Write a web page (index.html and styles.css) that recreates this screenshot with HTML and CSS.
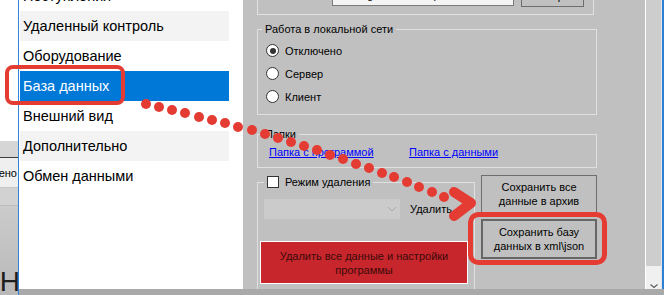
FILE: index.html
```html
<!DOCTYPE html>
<html lang="ru">
<head>
    <meta charset="UTF-8">
    <title>Настройки</title>
    <link rel="stylesheet" href="styles.css">
</head>
<body>
    <div class="screen">
        <div class="bgwin">
            <div class="bg-top"></div>
            <div class="bg-bar"></div>
            <div class="bg-row"><span>Выполнено</span></div>
            <div class="bg-strip"></div>
            <div class="bg-low"><span class="bg-big">Н</span></div>
        </div>

        <div class="dialog">
            <div class="dialog-body">
                <ul class="menu">
                    <li class="menu-item">Поступления</li>
                    <li class="menu-item alt">Удаленный контроль</li>
                    <li class="menu-item">Оборудование</li>
                    <li class="menu-item active">База данных</li>
                    <li class="menu-item">Внешний вид</li>
                    <li class="menu-item alt">Дополнительно</li>
                    <li class="menu-item">Обмен данными</li>
                </ul>

                <div class="panel">
                    <div class="topbox">
                        <span class="path-label">Путь к базе:</span>
                        <span class="path-field">C:\Program Files\Торговля\base</span>
                        <span class="path-btn">Обзор...</span>
                    </div>

                    <fieldset class="group net">
                        <legend class="group-title">Работа в локальной сети</legend>
                        <div class="radio-row"><span class="radio checked"></span>Отключено</div>
                        <div class="radio-row"><span class="radio"></span>Сервер</div>
                        <div class="radio-row"><span class="radio"></span>Клиент</div>
                    </fieldset>

                    <fieldset class="group folders">
                        <legend class="group-title">Папки</legend>
                        <div class="links">
                            <a class="link" href="#">Папка с программой</a>
                            <a class="link" href="#">Папка с данными</a>
                        </div>
                    </fieldset>

                    <div class="bottom-row">
                        <fieldset class="group del">
                            <legend class="group-title check-title"><span class="check"></span>Режим удаления</legend>
                            <div class="del-row">
                                <div class="combo">
                                    <svg width="10" height="6" viewBox="0 0 10 6"><path d="M1 1 L5 5 L9 1" fill="none" stroke="#a9a9a9" stroke-width="1"/></svg>
                                </div>
                                <span class="del-text">Удалить</span>
                            </div>
                            <div class="danger-btn">Удалить все данные и настройки<br>программы</div>
                        </fieldset>

                        <div class="side">
                            <div class="btn">Сохранить все<br>данные в архив</div>
                            <div class="btn focus">Сохранить базу<br>данных в xml\json</div>
                        </div>
                    </div>
                </div>

                <div class="scroll">
                    <div class="scroll-btn">
                        <svg width="8" height="4" viewBox="0 0 8 4"><path d="M0.5 0.5 L4 3.5 L7.5 0.5" fill="none" stroke="#606060" stroke-width="1.2"/></svg>
                    </div>
                </div>
                <div class="edge"></div>
            </div>
            <div class="dialog-bottom"></div>
        </div>

        <svg class="marks" width="665" height="295" viewBox="0 0 665 295">
            <rect x="7" y="67" width="116" height="36" rx="6" fill="none" stroke="#e43b33" stroke-width="4"/>
            <rect x="470.5" y="214.5" width="134" height="48" rx="8" fill="none" stroke="#e43b33" stroke-width="5"/>
            <g fill="#e43b33">
                <circle cx="146" cy="104" r="5"/>
                <circle cx="159" cy="107" r="5"/>
                <circle cx="172" cy="110" r="5"/>
                <circle cx="185" cy="113" r="5"/>
                <circle cx="199" cy="117" r="5"/>
                <circle cx="212" cy="120" r="5"/>
                <circle cx="225" cy="123" r="5"/>
                <circle cx="238" cy="127" r="5"/>
                <circle cx="252" cy="130" r="5"/>
                <circle cx="265" cy="134" r="5"/>
                <circle cx="278" cy="138" r="5"/>
                <circle cx="291" cy="142" r="5"/>
                <circle cx="304" cy="146" r="5"/>
                <circle cx="317" cy="150" r="5"/>
                <circle cx="330" cy="155" r="5"/>
                <circle cx="343" cy="159" r="5"/>
                <circle cx="356" cy="164" r="5"/>
                <circle cx="369" cy="168" r="5"/>
                <circle cx="382" cy="173" r="5"/>
                <circle cx="394" cy="177" r="5"/>
                <circle cx="407" cy="182" r="5"/>
                <circle cx="419" cy="187" r="5"/>
                <circle cx="432" cy="192" r="5"/>
                <circle cx="444" cy="197" r="5"/>
            </g>
            <path d="M454 192 L471 203 L454 216" fill="none" stroke="#e43b33" stroke-width="10" stroke-linecap="round" stroke-linejoin="round"/>
        </svg>
    </div>
</body>
</html>
```

FILE: styles.css
```css
body {
    margin: 0;
    width: 665px;
    height: 295px;
    overflow: hidden;
    font-family: "Liberation Sans", Arial, sans-serif;
    font-size: 11px;
    color: #000;
    background-color: #fff;
}

.screen {
    position: relative;
    display: flex;
    width: 665px;
    height: 295px;
}

/* окно на заднем плане */
.bgwin {
    width: 18px;
    flex-shrink: 0;
    display: flex;
    flex-direction: column;
    overflow: hidden;
}

.bg-top {
    height: 141px;
    background-color: #fff;
}

.bg-bar {
    height: 16px;
    background-color: #d6d6d6;
    border-bottom: 1px solid #3c3c3c;
}

.bg-row {
    height: 29px;
    background-color: #efefef;
    border-bottom: 1px solid #c6c6c6;
    display: flex;
    justify-content: flex-end;
    align-items: center;
    white-space: nowrap;
    padding-right: 1px;
    font-size: 11px;
}

.bg-strip {
    height: 17px;
    background-color: #d2d2d2;
    border-bottom: 1px solid #bdbdbd;
}

.bg-low {
    flex: 1;
    background: linear-gradient(#cbcbcb, #b9b9b9);
    display: flex;
    justify-content: flex-end;
    align-items: flex-end;
}

.bg-big {
    font-size: 28px;
    line-height: 28px;
    color: #1e1e1e;
    margin-right: -2px;
    margin-bottom: -1px;
}

/* диалог настроек */
.dialog {
    width: 646px;
    flex-shrink: 0;
    border-left: 1px solid #2f86d8;
    box-sizing: border-box;
    display: flex;
    flex-direction: column;
}

.dialog-body {
    display: flex;
    height: 289px;
}

.dialog-bottom {
    height: 6px;
    background-color: #a9a9a9;
}

.menu {
    width: 224px;
    flex-shrink: 0;
    margin: 0;
    padding: 0;
    list-style: none;
    background-color: #fff;
    overflow: hidden;
}

.menu-item {
    width: 209px;
    height: 30px;
    margin-left: 1px;
    padding-left: 3px;
    box-sizing: border-box;
    line-height: 30px;
    font-size: 14.5px;
    white-space: nowrap;
}

.menu-item:first-child {
    margin-top: -19px;
}

.menu-item.alt {
    background-color: #f3f3f3;
}

.menu-item.active {
    background-color: #0078d7;
    color: #fff;
}

.panel {
    width: 402px;
    flex-shrink: 0;
    padding-left: 14px;
    box-sizing: border-box;
    background-color: #c0c0c0;
    overflow: hidden;
    display: flex;
    flex-direction: column;
}

.topbox {
    width: 337px;
    height: 45px;
    flex-shrink: 0;
    margin-top: -30px;
    border: 1px solid #e0e0e0;
    border-top: none;
    box-sizing: border-box;
    display: flex;
    align-items: flex-end;
    padding: 0 0 8px 4px;
}

.path-label {
    width: 70px;
    align-self: center;
    margin-bottom: -8px;
    white-space: nowrap;
}

.path-field {
    width: 182px;
    height: 20px;
    box-sizing: border-box;
    background-color: #f4f4f4;
    border: 1px solid #7a7a7a;
    padding: 2px 3px;
    white-space: nowrap;
    overflow: hidden;
}

.path-btn {
    width: 63px;
    height: 22px;
    margin-left: 7px;
    margin-bottom: -1px;
    box-sizing: border-box;
    border: 1px solid #6d6d6d;
    text-align: center;
    line-height: 20px;
}

.group {
    margin: 0;
    padding: 0 4px;
    min-width: 0;
    border: 1px solid #e0e0e0;
    box-sizing: border-box;
    flex-shrink: 0;
}

.group-title {
    padding: 0 3px;
    line-height: 16px;
    font-size: 11px;
}

.net {
    width: 340px;
    margin-top: 6px;
    padding-bottom: 6px;
}

.radio-row {
    height: 23px;
    display: flex;
    align-items: center;
    margin-left: 4px;
}

.radio-row:first-of-type {
    margin-top: 2px;
}

.radio {
    width: 13px;
    height: 13px;
    box-sizing: border-box;
    border: 1px solid #333;
    border-radius: 50%;
    background-color: #fff;
    margin-right: 6px;
    display: flex;
    align-items: center;
    justify-content: center;
}

.radio.checked::after {
    content: "";
    width: 6px;
    height: 6px;
    border-radius: 50%;
    background-color: #333;
}

.folders {
    width: 340px;
    margin-top: 11px;
    padding-bottom: 6px;
}

.links {
    display: grid;
    grid-template-columns: 140px auto;
    height: 18px;
    margin-top: 1px;
    margin-left: 7px;
    align-items: center;
}

.link {
    color: #0000ff;
    text-decoration: underline;
    justify-self: start;
}

.bottom-row {
    display: flex;
    gap: 6px;
    margin-top: 6px;
    align-items: flex-start;
}

.del {
    width: 218px;
    padding: 0 6px 12px 6px;
}

.check-title {
    display: flex;
    align-items: center;
}

.check {
    width: 12px;
    height: 12px;
    box-sizing: border-box;
    border: 1px solid #333;
    background-color: #fff;
    margin-right: 6px;
}

.del-row {
    display: flex;
    align-items: center;
    margin-top: 9px;
}

.combo {
    width: 136px;
    height: 20px;
    background-color: #cbcbcb;
    display: flex;
    justify-content: flex-end;
    align-items: center;
    padding-right: 3px;
    box-sizing: border-box;
}

.del-text {
    margin-left: 10px;
    white-space: nowrap;
}

.danger-btn {
    width: 208px;
    height: 43px;
    margin: 22px 0 0 -4px;
    box-sizing: border-box;
    border: 1px solid #fff;
    background-color: #c6262c;
    color: #3d0a0a;
    line-height: 14px;
    text-align: center;
    display: flex;
    align-items: center;
    justify-content: center;
}

.side {
    width: 116px;
    margin-top: 1px;
    display: flex;
    flex-direction: column;
    gap: 6px;
}

.btn {
    height: 38px;
    box-sizing: border-box;
    border: 1px solid #6e6e6e;
    line-height: 14px;
    text-align: center;
    display: flex;
    align-items: center;
    justify-content: center;
}

.btn.focus {
    height: 40px;
    border: 2px solid #666;
}

.scroll {
    width: 16px;
    flex-shrink: 0;
    border-left: 1px solid #fff;
    box-sizing: border-box;
    background-color: #cdcdcd;
    display: flex;
    flex-direction: column;
    justify-content: flex-end;
}

.scroll-btn {
    height: 23px;
    background-color: #f0f0f0;
    display: flex;
    justify-content: center;
    align-items: flex-end;
    padding-bottom: 1px;
    box-sizing: border-box;
}

.edge {
    width: 3px;
    flex-shrink: 0;
    background: linear-gradient(to right, #e6e6e6 0 1px, #2d7fd3 1px 3px);
}

/* пометки поверх скриншота */
.marks {
    position: absolute;
    top: 0;
    left: 0;
    pointer-events: none;
}
```
